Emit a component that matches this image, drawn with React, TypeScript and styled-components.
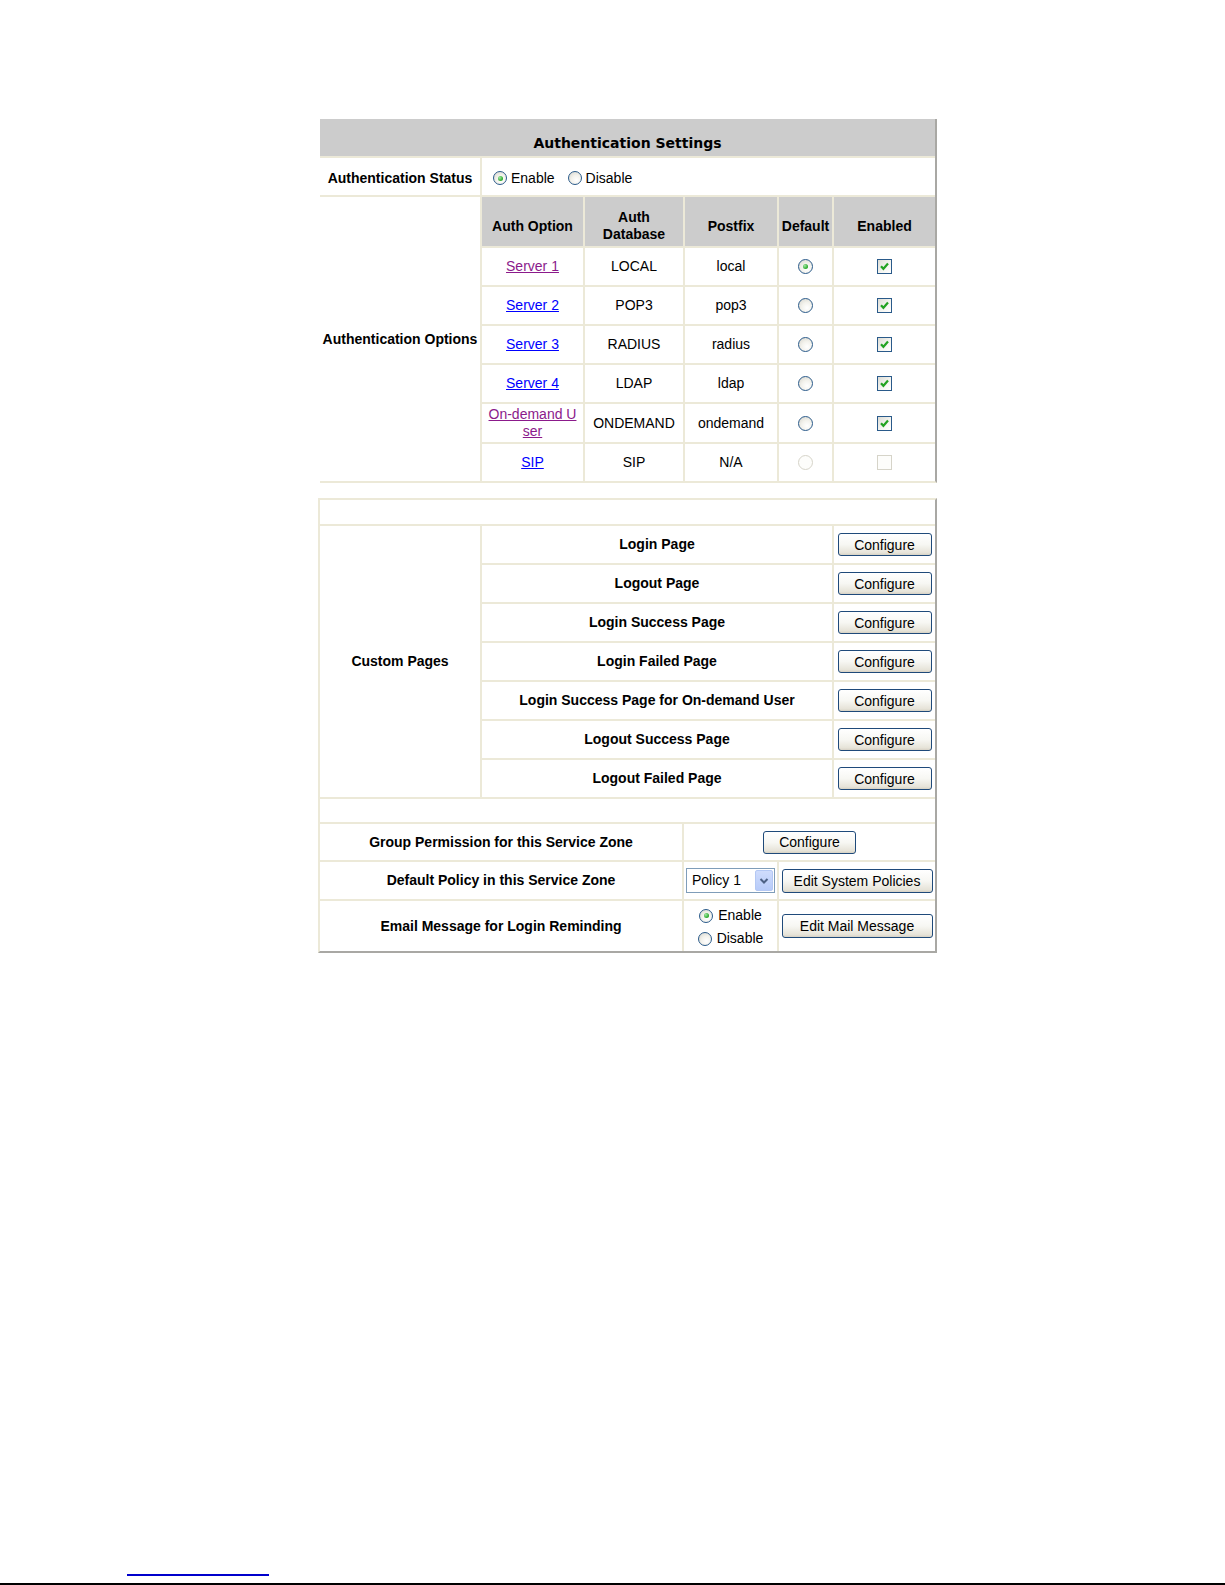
import React from "react";
import styled, { createGlobalStyle } from "styled-components";

const BEIGE = "#ece9d8";
const GRAY = "#cccccc";
const EDGE = "#a9a8a4";

const Global = createGlobalStyle`
  html, body { margin: 0; padding: 0; background: #fff; }
  body {
    font-family: "Liberation Sans", Arial, sans-serif;
    font-size: 14px;
    color: #000;
  }
`;

const Page = styled.div`
  min-height: 1585px;
  box-sizing: border-box;
  padding-top: 119px;
  display: flex;
  flex-direction: column;
`;

const Panel = styled.div<{ $framed?: boolean }>`
  width: 615px;
  display: flex;
  flex-direction: column;
  gap: 2px;
  background: ${BEIGE};
  border-right: 2px solid ${EDGE};
  margin-left: ${(p) => (p.$framed ? 318 : 320)}px;
  margin-top: ${(p) => (p.$framed ? 15 : 0)}px;
  border-left: ${(p) => (p.$framed ? `2px solid ${BEIGE}` : "none")};
  border-top: ${(p) => (p.$framed ? `2px solid ${BEIGE}` : "none")};
  border-bottom: 2px solid ${(p) => (p.$framed ? EDGE : BEIGE)};
`;

const Title = styled.div`
  height: 37px;
  box-sizing: border-box;
  padding-top: 10px;
  background: ${GRAY};
  display: flex;
  align-items: center;
  justify-content: center;
  font-family: "DejaVu Sans", Verdana, sans-serif;
  font-weight: bold;
  font-size: 14px;
`;

const Blank = styled.div<{ $h: number }>`
  height: ${(p) => p.$h}px;
  background: #fff;
`;

const Grid = styled.div<{ $cols: string; $rows: string }>`
  display: grid;
  grid-template-columns: ${(p) => p.$cols};
  grid-template-rows: ${(p) => p.$rows};
  gap: 2px;
  background: ${BEIGE};
`;

const Cell = styled.div<{ $left?: boolean; $span?: string; $rowSpan?: string }>`
  background: #fff;
  display: flex;
  align-items: center;
  justify-content: ${(p) => (p.$left ? "flex-start" : "center")};
  text-align: center;
  line-height: 17px;
  ${(p) => (p.$span ? `grid-column: ${p.$span};` : "")}
  ${(p) => (p.$rowSpan ? `grid-row: ${p.$rowSpan};` : "")}
`;

const Label = styled(Cell)`
  font-weight: bold;
`;

const HeadCell = styled(Cell)`
  background: ${GRAY};
  font-weight: bold;
  padding-top: 9px;
  box-sizing: border-box;
`;

const StatusCell = styled(Cell)`
  padding-left: 11px;
  padding-top: 3px;
  box-sizing: border-box;
`;

const StatusLabel = styled(Label)`
  padding-top: 3px;
  box-sizing: border-box;
`;

const Link = styled.a<{ $visited?: boolean }>`
  color: ${(p) => (p.$visited ? "#8b1a8b" : "#0000ff")};
  text-decoration: underline;
  cursor: pointer;
`;

const Radio = styled.span<{ $on?: boolean; $off?: boolean; $size?: number }>`
  position: relative;
  display: inline-block;
  flex: none;
  box-sizing: border-box;
  width: ${(p) => p.$size ?? 14}px;
  height: ${(p) => p.$size ?? 14}px;
  border-radius: 50%;
  border: 1px solid ${(p) => (p.$off ? "#d6d4c9" : "#2a5a8a")};
  background: ${(p) =>
    p.$off
      ? "#fdfdfb"
      : "radial-gradient(circle at 62% 68%, #ffffff 0%, #f3f2ec 45%, #d4d3cb 100%)"};
  &::after {
    content: "";
    display: ${(p) => (p.$on ? "block" : "none")};
    position: absolute;
    inset: 0;
    margin: auto;
    width: 5px;
    height: 5px;
    border-radius: 50%;
    background: radial-gradient(circle at 35% 35%, #a4e8a4, #27a827 70%);
  }
`;

const Choice = styled.label<{ $gap: number }>`
  display: inline-flex;
  align-items: center;
  gap: ${(p) => p.$gap}px;
  margin-right: 13px;
  line-height: 17px;
`;

const ChoiceStack = styled.div`
  display: flex;
  flex-direction: column;
  align-items: center;
  padding-top: 2px;
  ${Choice} {
    margin-right: 0;
    line-height: 23px;
  }
`;

const Box = styled.span<{ $off?: boolean }>`
  display: inline-flex;
  align-items: center;
  justify-content: center;
  box-sizing: border-box;
  width: 15px;
  height: 15px;
  border: 1px solid ${(p) => (p.$off ? "#d6d4c9" : "#2a5a8a")};
  background: ${(p) =>
    p.$off ? "#fdfdfb" : "linear-gradient(135deg, #dcdcd5 0%, #f6f6f2 60%, #ffffff 100%)"};
`;

const Button = styled.button<{ $w: number; $h?: number }>`
  font-family: "Liberation Sans", Arial, sans-serif;
  font-size: 14px;
  color: #000;
  width: ${(p) => p.$w}px;
  height: ${(p) => p.$h ?? 23}px;
  padding: 0;
  border: 1px solid #1f4a7a;
  border-radius: 3px;
  background: linear-gradient(#ffffff 0%, #f7f7f3 50%, #e6e3d8 90%, #d6d1c4 100%);
  cursor: pointer;
`;

const Select = styled.div`
  width: 89px;
  height: 25px;
  box-sizing: border-box;
  border: 1px solid #7f9db9;
  background: #fff;
  display: flex;
  align-items: center;
  justify-content: space-between;
  padding: 1px 1px 1px 5px;
`;

const SelectArrow = styled.span`
  width: 18px;
  height: 21px;
  box-sizing: border-box;
  border: 1px solid #b4c8f4;
  border-radius: 2px;
  background: linear-gradient(#cfdcfc, #b7cbf9);
  display: flex;
  align-items: center;
  justify-content: center;
`;

const Footer = styled.div`
  margin-top: auto;
  display: flex;
  flex-direction: column;
  gap: 7px;
`;

const LinkRule = styled.div`
  width: 142px;
  height: 2px;
  margin-left: 127px;
  background: #0000cc;
`;

const BlackRule = styled.div`
  height: 2px;
  background: #000;
`;

const Check = () => (
  <svg width="11" height="11" viewBox="0 0 11 11">
    <path d="M2 5.2 L4.4 7.8 L9 2.6" fill="none" stroke="#22a322" strokeWidth="2.2" />
  </svg>
);

const Chevron = () => (
  <svg width="10" height="8" viewBox="0 0 10 8">
    <path d="M1.5 2 L5 5.5 L8.5 2" fill="none" stroke="#4d6185" strokeWidth="2" />
  </svg>
);

type AuthRow = {
  name: React.ReactNode;
  visited?: boolean;
  db: string;
  postfix: string;
  isDefault?: boolean;
  disabled?: boolean;
};

const authRows: AuthRow[] = [
  { name: "Server 1", visited: true, db: "LOCAL", postfix: "local", isDefault: true },
  { name: "Server 2", db: "POP3", postfix: "pop3" },
  { name: "Server 3", db: "RADIUS", postfix: "radius" },
  { name: "Server 4", db: "LDAP", postfix: "ldap" },
  {
    name: (
      <>
        On-demand U<br />
        ser
      </>
    ),
    visited: true,
    db: "ONDEMAND",
    postfix: "ondemand",
  },
  { name: "SIP", db: "SIP", postfix: "N/A", disabled: true },
];

const customPages = [
  "Login Page",
  "Logout Page",
  "Login Success Page",
  "Login Failed Page",
  "Login Success Page for On-demand User",
  "Logout Success Page",
  "Logout Failed Page",
];

export default function App() {
  return (
    <Page>
      <Global />
      <Panel>
        <Title>Authentication Settings</Title>
        <Grid $cols="160px 453px" $rows="37px 284px">
          <StatusLabel>Authentication Status</StatusLabel>
          <StatusCell $left>
            <Choice $gap={4}>
              <Radio $on />
              Enable
            </Choice>
            <Choice $gap={4}>
              <Radio />
              Disable
            </Choice>
          </StatusCell>
          <Label>Authentication Options</Label>
          <Grid
            $cols="101px 98px 92px 53px 101px"
            $rows="49px 37px 37px 37px 37px 38px 37px"
          >
            <HeadCell>Auth Option</HeadCell>
            <HeadCell>
              Auth
              <br />
              Database
            </HeadCell>
            <HeadCell>Postfix</HeadCell>
            <HeadCell>Default</HeadCell>
            <HeadCell>Enabled</HeadCell>
            {authRows.map((r, i) => (
              <React.Fragment key={i}>
                <Cell>
                  <Link $visited={r.visited}>{r.name}</Link>
                </Cell>
                <Cell>{r.db}</Cell>
                <Cell>{r.postfix}</Cell>
                <Cell>
                  <Radio $size={15} $on={r.isDefault} $off={r.disabled} />
                </Cell>
                <Cell>
                  <Box $off={r.disabled}>{!r.disabled && <Check />}</Box>
                </Cell>
              </React.Fragment>
            ))}
          </Grid>
        </Grid>
      </Panel>

      <Panel $framed>
        <Blank $h={24} />
        <Grid $cols="160px 350px 101px" $rows="repeat(7, 37px)">
          <Label $rowSpan="1 / span 7">Custom Pages</Label>
          {customPages.map((page) => (
            <React.Fragment key={page}>
              <Label>{page}</Label>
              <Cell>
                <Button $w={94}>Configure</Button>
              </Cell>
            </React.Fragment>
          ))}
        </Grid>
        <Blank $h={23} />
        <Grid $cols="362px 93px 156px" $rows="36px 37px 50px">
          <Label>Group Permission for this Service Zone</Label>
          <Cell $span="2 / span 2">
            <Button $w={93}>Configure</Button>
          </Cell>
          <Label>Default Policy in this Service Zone</Label>
          <Cell>
            <Select>
              Policy 1
              <SelectArrow>
                <Chevron />
              </SelectArrow>
            </Select>
          </Cell>
          <Cell>
            <Button $w={151} $h={24}>
              Edit System Policies
            </Button>
          </Cell>
          <Label>Email Message for Login Reminding</Label>
          <Cell>
            <ChoiceStack>
              <Choice $gap={5}>
                <Radio $on />
                Enable
              </Choice>
              <Choice $gap={5}>
                <Radio />
                Disable
              </Choice>
            </ChoiceStack>
          </Cell>
          <Cell>
            <Button $w={151} $h={24}>
              Edit Mail Message
            </Button>
          </Cell>
        </Grid>
      </Panel>

      <Footer>
        <LinkRule />
        <BlackRule />
      </Footer>
    </Page>
  );
}
